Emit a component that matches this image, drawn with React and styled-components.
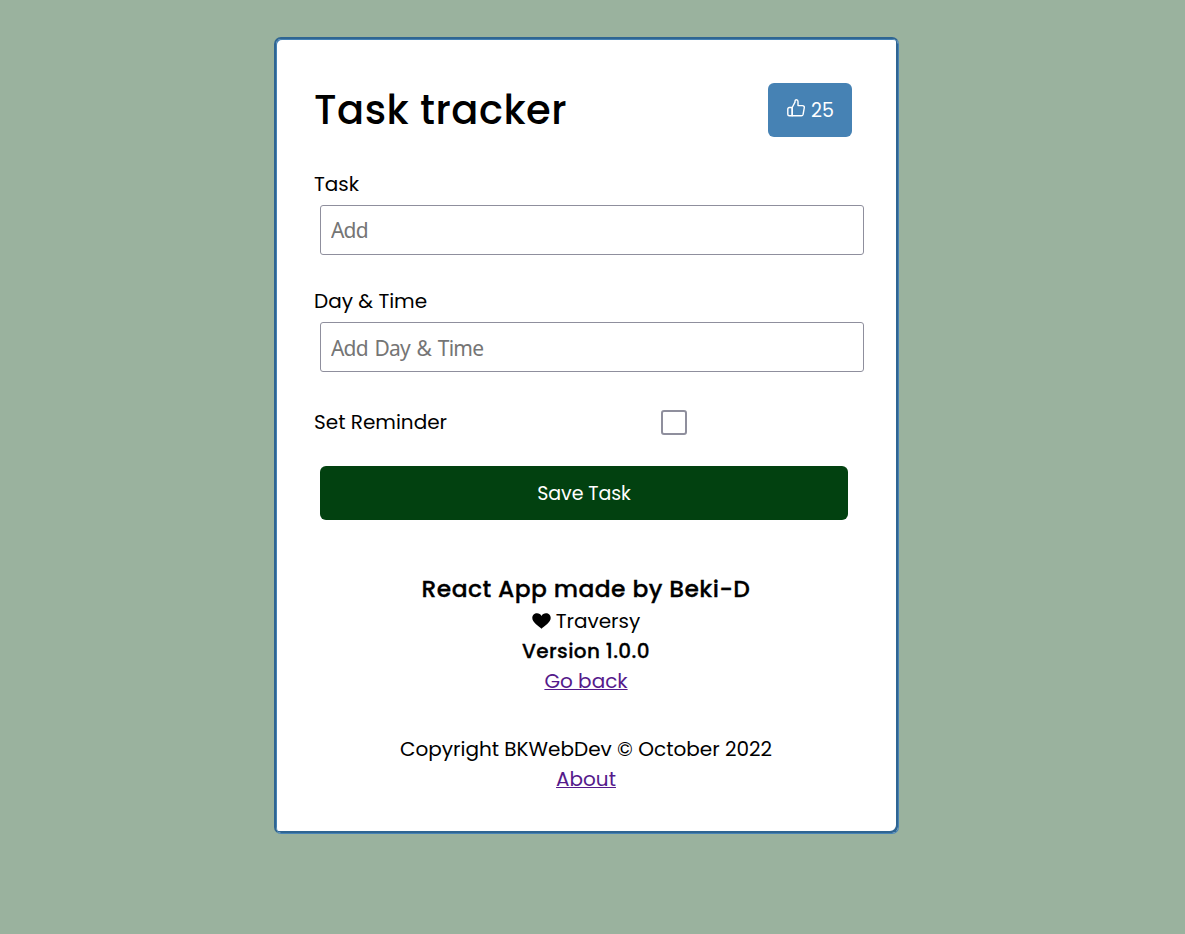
import React from 'react';
import styled, { createGlobalStyle, css } from 'styled-components';

const GlobalStyle = createGlobalStyle`
  * { box-sizing: border-box; }
  body {
    margin: 0;
    min-height: 100vh;
    background: #9ab29e;
    color: #000;
    font: 20px/30px Poppins, Inter, "Liberation Sans", sans-serif;
  }
  button, input { font: inherit; }
`;

const grooveShade = '#2f6592';

const Card = styled.main`
  width: 625px;
  height: 797px;
  margin: 37px 0 0 274px;
  padding: 38px 39px 39px 38px;
  border: solid;
  border-width: 2px 1px 1px 2px;
  border-color: ${grooveShade} steelblue steelblue ${grooveShade};
  border-radius: 7px;
  background: #fff;
  box-shadow: inset 1px 1px steelblue, inset -2px -2px ${grooveShade};
`;

const Header = styled.header`
  display: flex;
  align-items: center;
  justify-content: space-between;
  height: 66px;
  padding-right: 7px;
`;

const heavy = css`
  font-weight: 500;
  letter-spacing: 0.018em;
  -webkit-text-stroke: 0.3px currentColor;
`;

const Title = styled.h1`
  margin: 0;
  font-size: 40px;
  line-height: 60px;
  font-weight: 500;
  letter-spacing: 0.5px;
`;

const LikeButton = styled.button`
  display: flex;
  align-items: center;
  gap: 6px;
  width: 84px;
  height: 54px;
  padding: 1px 0 0 19px;
  border: 0;
  border-radius: 6px;
  background: steelblue;
  color: #fff;
  font-size: 19px;
`;

const LikeIcon = styled.svg`
  width: 18px;
  height: 18px;
  margin-top: -6px;
  fill: none;
  stroke: currentColor;
  stroke-width: 1.4;
  stroke-linejoin: round;
`;

const Field = styled.div`
  height: 117px;
  padding-top: 26px;
`;

const Label = styled.label`
  display: block;
  height: 30px;
`;

const Input = styled.input`
  display: block;
  width: 544px;
  height: 50px;
  margin: 6px 0 0 6px;
  padding: ${(p) => p.$nudge || 0}px 10px 0;
  border: 1px solid #8f8f9d;
  border-radius: 3px;
  font-family: "Noto Sans", sans-serif;
  font-size: 21px;
  letter-spacing: -0.8px;
  word-spacing: 2px;
  &::placeholder { color: #757575; opacity: 1; }
`;

const Reminder = styled.div`
  display: flex;
  align-items: center;
  justify-content: space-between;
  width: 373px;
  height: 30px;
  margin-top: 30px;
`;

const Checkbox = styled.input`
  appearance: none;
  width: 26px;
  height: 25px;
  margin: 1px 0 0;
  border: 2px solid #8f8f9d;
  border-radius: 3px;
`;

const SaveButton = styled.button`
  display: block;
  width: 528px;
  height: 54px;
  margin: 29px 0 0 6px;
  padding: 1px 0 0;
  border: 0;
  border-radius: 6px;
  background: #024110;
  color: #fff;
  font-size: 19px;
  letter-spacing: -0.1px;
`;

const Credits = styled.section`
  margin-top: 51px;
  padding-right: 1px;
  text-align: center;
`;

const Line = styled.div`
  height: 30px;
`;

const Version = styled(Line)`
  ${heavy}
`;

const Heading = styled.h3`
  margin: 0;
  font-size: 23.4px;
  line-height: 35px;
  ${heavy}
`;

const Link = styled.a`
  color: #551a8b;
  text-decoration: underline 1px;
`;

const Footer = styled.footer`
  margin-top: 38px;
  padding-right: 1px;
  text-align: center;
`;

const HeartIcon = styled.svg`
  width: 19px;
  height: 16px;
  margin-right: 5px;
  vertical-align: -1px;
`;

function Heart() {
  return (
    <HeartIcon viewBox="0 0 19 16" aria-hidden="true">
      <path d="M9.5 15.8C7.2 13.2.3 9.4.3 4.9.3 2.2 2.4.3 5 .3c2 0 3.700 1 4.500 2.700C10.300 1.300 12 .3 14 .3c2.600 0 4.700 1.900 4.700 4.600 0 4.500-6.900 8.300-9.200 10.900Z" />
    </HeartIcon>
  );
}

function ThumbUp() {
  return (
    <LikeIcon viewBox="0 0 18 18" aria-hidden="true">
      <path d="M5.200 8.500 8 3.200V2.100A1.400 1.400 0 0 1 9.400.8c1 0 1.600.8 1.600 1.800V6.600h4.500c1.200 0 2 .9 1.800 2l-1.200 6.800c-.2.9-.8 1.400-1.700 1.400H5.200Z" />
      <path d="M5.200 8.500H2.300c-.9 0-1.500.6-1.500 1.500v5.300c0 .9.600 1.500 1.500 1.500h2.900Z" />
    </LikeIcon>
  );
}

export default function App() {
  return (
    <>
      <GlobalStyle />
      <Card>
        <Header>
          <Title>Task tracker</Title>
          <LikeButton><ThumbUp />25</LikeButton>
        </Header>
        <Field>
          <Label htmlFor="task">Task</Label>
          <Input id="task" placeholder="Add" />
        </Field>
        <Field>
          <Label htmlFor="day">Day &amp; Time</Label>
          <Input id="day" placeholder="Add Day &amp; Time" $nudge={1} />
        </Field>
        <Reminder>
          <Label htmlFor="reminder">Set Reminder</Label>
          <Checkbox id="reminder" type="checkbox" />
        </Reminder>
        <SaveButton>Save Task</SaveButton>
        <Credits>
          <Heading>React App made by Beki-D</Heading>
          <Line><Heart />Traversy</Line>
          <Version>Version 1.0.0</Version>
          <Line><Link href="#">Go back</Link></Line>
        </Credits>
        <Footer>
          <Line>Copyright BKWebDev © October 2022</Line>
          <Line><Link href="#">About</Link></Line>
        </Footer>
      </Card>
    </>
  );
}
